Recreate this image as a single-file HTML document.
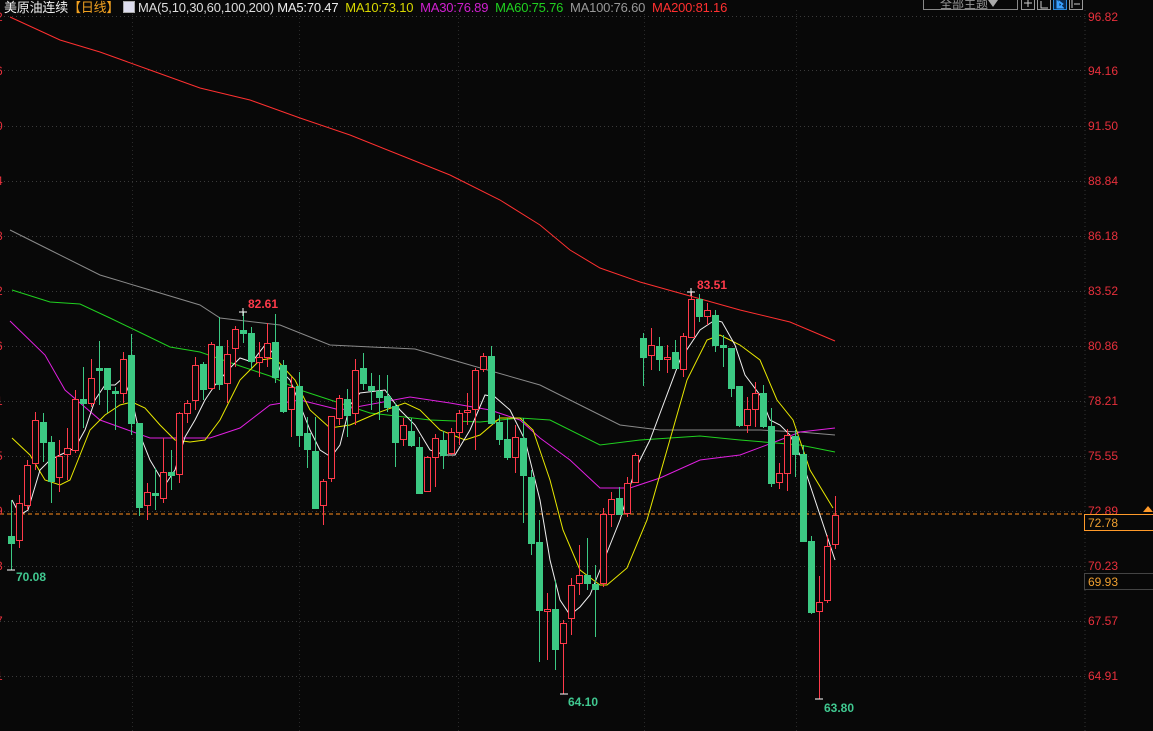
<!DOCTYPE html>
<html><head><meta charset="utf-8"><style>
html,body{margin:0;padding:0;background:#080808;width:1153px;height:731px;overflow:hidden;font-family:"Liberation Sans","Noto Sans CJK SC",sans-serif}
svg{position:absolute;left:0;top:0}
.hd{position:absolute;top:-3px;left:4px;font-size:13px;white-space:nowrap;color:#ddd;letter-spacing:-0.2px}
.ax{font-size:12px;fill:#e8303c}
</style></head><body>
<svg id="s" width="1153" height="731" xmlns="http://www.w3.org/2000/svg">
<g id="grid" stroke="#3a3a3a" stroke-dasharray="1,3" stroke-width="1"></g>
<g id="vgrid" stroke="#2a2a2a" stroke-dasharray="1,3" stroke-width="1"></g>
<line x1="1085" y1="10" x2="1085" y2="731" stroke="#333" stroke-dasharray="1,3"/>
<line x1="0" y1="514" x2="1085" y2="514" stroke="#ff8c1a" stroke-dasharray="4,3"/>
<g id="ma" fill="none" stroke-width="1"></g>
<g id="cd"></g>
<g font-weight="bold" font-size="12">
<text x="248" y="308" fill="#ff3a4a">82.61</text>
<text x="697" y="289" fill="#ff3a4a">83.51</text>
<text x="16" y="581" fill="#40c890">70.08</text>
<text x="568" y="706" fill="#40c890">64.10</text>
<text x="824" y="712" fill="#40c890">63.80</text>
</g>
<g stroke="#fff" stroke-width="1">
<line x1="239" y1="312" x2="247" y2="312"/><line x1="243" y1="308" x2="243" y2="316"/>
<line x1="687" y1="292" x2="695" y2="292"/><line x1="691" y1="288" x2="691" y2="296"/>
<line x1="560" y1="694" x2="568" y2="694"/><line x1="815" y1="699" x2="823" y2="699"/>
<line x1="7" y1="570" x2="15" y2="570"/>
</g>
<g class="ax">
<text x="1088" y="21">96.82</text><text x="1088" y="75">94.16</text><text x="1088" y="130">91.50</text>
<text x="1088" y="185">88.84</text><text x="1088" y="240">86.18</text><text x="1088" y="295">83.52</text>
<text x="1088" y="350">80.86</text><text x="1088" y="405">78.21</text><text x="1088" y="460">75.55</text>
<text x="1088" y="515">72.89</text><text x="1088" y="570">70.23</text><text x="1088" y="625">67.57</text>
<text x="1088" y="680">64.91</text>
<text x="-4" y="21">2</text><text x="-4" y="75">6</text><text x="-4" y="130">0</text><text x="-4" y="185">4</text>
<text x="-4" y="240">8</text><text x="-4" y="295">2</text><text x="-4" y="350">6</text><text x="-4" y="405">1</text>
<text x="-4" y="460">5</text><text x="-4" y="515">9</text><text x="-4" y="570">3</text><text x="-4" y="625">7</text><text x="-4" y="680">1</text>
</g>
<rect x="1084.5" y="514.5" width="70" height="16" fill="#080808" stroke="#ff9a2a"/>
<text x="1088" y="527" font-size="12" fill="#f0a030">72.78</text>
<rect x="1084.5" y="573.5" width="70" height="16" fill="#080808" stroke="#444"/>
<text x="1088" y="586" font-size="12" fill="#f0a030">69.93</text>
<path d="M1143 512 L1148 506 L1153 512 Z" fill="#ff9a2a"/>
<rect x="923.5" y="-2.5" width="94" height="12" fill="none" stroke="#888"/>
<text x="940" y="8" font-size="12" fill="#999">全部主题</text>
<path d="M988 0 L998 0 L993 7 Z" fill="#aaa"/>
<rect x="1021.5" y="-2.5" width="13" height="12" fill="none" stroke="#999"/>
<rect x="1037.5" y="-2.5" width="13" height="12" fill="none" stroke="#999"/>
<rect x="1053.5" y="-2.5" width="13" height="12" fill="#0a2a50" stroke="#2a8ae0"/>
<rect x="1069.5" y="-2.5" width="13" height="12" fill="none" stroke="#999"/>
<path d="M1028 0v7M1024 3h8" stroke="#ccc"/><path d="M1041 1v7h7" stroke="#ccc" fill="none"/>
<path d="M1057 0v8h7M1059 1l4 3-4 3z" stroke="#3aa0ff" fill="#3aa0ff"/><path d="M1072 0v8M1074 4h6" stroke="#ccc"/>
</svg>
<div class="hd"><span style="color:#eee">美原油连续</span><span style="color:#f0a020">【日线】</span> <span style="display:inline-block;width:10px;height:10px;border:1px solid #aaa;background:#dde;vertical-align:-1px"></span> MA(5,10,30,60,100,200) <span style="color:#eee">MA5:70.47</span> &nbsp;<span style="color:#d8d800">MA10:73.10</span> &nbsp;<span style="color:#d020d0">MA30:76.89</span> &nbsp;<span style="color:#20d020">MA60:75.76</span> &nbsp;<span style="color:#999">MA100:76.60</span> &nbsp;<span style="color:#ff3030">MA200:81.16</span></div>
<script>
var NS="http://www.w3.org/2000/svg";
function el(p,t,a){var e=document.createElementNS(NS,t);for(var k in a)e.setAttribute(k,a[k]);p.appendChild(e);return e;}
var g=document.getElementById('grid');
[16,70,126,181,236,291,346,401,456,511,566,621,676].forEach(function(y){el(g,'line',{x1:0,y1:y+.5,x2:1085,y2:y+.5});});
var vg=document.getElementById('vgrid');
[132,299,458,644,796].forEach(function(x){el(vg,'line',{x1:x+.5,y1:10,x2:x+.5,y2:731});});
var ma=document.getElementById('ma');
var L={
"#ff3030":"10,17 60,40 100,52 150,70 200,88 250,100 300,118 350,135 400,155 450,175 500,200 540,225 570,250 600,268 640,282 690,296 740,310 790,322 835,341",
"#8a8a8a":"10,230 50,250 100,275 150,290 200,305 220,318 280,325 330,345 415,349 470,365 540,385 580,405 620,425 660,430 700,430 760,430 800,432 835,435",
"#20d020":"12,290 50,302 80,304 110,318 135,330 170,347 200,352 240,366 270,376 300,390 370,413 430,420 480,422 520,418 550,420 600,445 640,440 700,436 740,440 800,445 835,452",
"#e020e0":"10,321 45,355 65,390 100,420 150,438 210,438 240,428 270,405 300,400 340,410 410,397 450,403 490,410 520,420 540,438 570,460 600,488 630,488 660,478 700,460 740,455 780,440 800,432 835,428",
"#e8e800":"12,438 30,455 45,480 60,485 70,480 90,430 105,415 120,405 132,402 145,408 160,425 175,440 190,442 205,440 220,420 240,380 260,360 275,358 295,380 310,410 330,428 350,425 380,412 405,403 420,410 440,430 465,440 480,435 500,418 520,418 533,430 550,480 563,530 580,570 600,585 607,585 627,568 647,520 667,450 687,380 707,340 720,335 740,345 760,360 777,400 793,420 810,470 833,508",
"#f0f0f0":"12,500 20,515 28,510 40,470 50,460 60,455 75,448 85,430 95,400 105,385 115,385 123,378 132,400 140,435 150,460 165,485 175,470 185,437 195,420 205,400 215,385 230,368 240,358 252,362 265,345 275,355 280,370 290,380 300,405 310,430 320,450 331,457 340,445 350,405 360,393 385,390 400,410 415,425 430,450 445,455 455,455 470,430 485,395 495,397 510,410 525,440 540,500 550,560 560,600 570,615 580,607 590,595 600,570 610,545 620,520 635,470 650,440 665,400 680,360 700,330 715,320 722,322 735,345 745,375 760,395 770,420 780,425 790,435 800,455 815,500 825,530 835,560"};
for(var c in L)el(ma,'polyline',{points:L[c],stroke:c});
var D=[[11,500,536,543,570,0],[19,495,503,540,548,1],[27,460,465,505,510,1],[35,412,420,463,470,1],[43,413,422,442,462,0],[51,436,442,481,503,0],[59,440,456,477,492,1],[67,428,448,454,480,1],[75,390,399,450,453,1],[83,367,399,403,428,0],[91,359,378,403,407,1],[99,341,368,370,405,0],[107,368,368,389,413,0],[115,387,391,393,430,0],[123,352,359,393,403,1],[131,334,355,423,435,0],[139,423,423,507,516,0],[147,483,492,505,520,1],[155,468,493,495,510,0],[163,438,472,498,503,1],[171,450,472,475,490,0],[179,412,413,474,483,1],[187,400,403,413,423,1],[195,357,365,400,410,1],[203,362,364,389,400,0],[211,342,344,388,390,1],[219,317,346,384,390,0],[227,340,354,383,403,1],[235,326,329,348,367,1],[243,312,330,333,343,0],[251,327,333,361,368,0],[259,342,357,362,377,1],[267,323,343,357,367,1],[275,314,342,377,383,0],[283,360,365,411,413,0],[291,377,387,409,437,1],[299,372,386,435,447,0],[307,417,433,449,468,0],[315,417,451,508,508,0],[323,479,481,505,525,1],[331,416,416,478,482,1],[339,395,398,418,425,1],[347,389,399,415,437,0],[355,359,370,413,425,1],[363,353,368,383,390,0],[371,373,386,390,410,0],[379,375,391,397,420,0],[387,375,396,407,412,0],[395,403,406,442,467,0],[403,418,425,439,446,1],[411,418,431,445,447,0],[419,437,447,493,494,0],[427,456,457,491,491,1],[435,434,438,457,487,1],[443,431,440,455,469,0],[451,428,432,453,455,1],[459,410,413,432,445,1],[467,393,410,412,425,1],[475,368,370,409,450,1],[483,353,356,369,372,1],[491,346,356,423,423,0],[499,415,422,439,445,0],[507,418,439,457,460,0],[515,425,437,457,473,1],[523,418,438,475,523,0],[531,470,477,543,555,0],[539,520,542,610,662,0],[547,593,609,611,660,1],[555,580,609,649,670,0],[563,620,623,643,694,1],[571,578,585,618,635,1],[579,545,575,583,595,1],[587,538,575,583,590,0],[595,565,584,589,637,0],[603,508,514,583,587,1],[611,492,499,514,527,1],[619,487,498,514,514,0],[627,477,483,513,517,1],[635,453,455,482,482,1],[643,333,338,357,386,0],[651,328,345,355,370,1],[659,337,346,359,371,0],[667,345,357,359,373,1],[675,340,352,368,368,0],[683,333,336,369,377,1],[691,292,299,337,337,1],[699,294,299,316,322,0],[707,303,310,316,325,1],[715,310,315,345,352,0],[723,335,345,347,367,0],[731,348,348,388,397,0],[739,386,386,425,427,0],[747,397,409,425,433,1],[755,382,393,409,427,1],[763,385,393,426,428,0],[771,408,426,483,487,0],[779,463,473,482,489,1],[787,429,435,473,491,1],[795,430,436,454,477,0],[803,445,454,541,541,0],[811,536,541,612,614,0],[819,576,602,611,699,1],[827,535,546,600,603,1],[835,496,515,544,549,1]];
var cd=document.getElementById('cd');
D.forEach(function(d){var x=d[0],up=d[5],col=up?'#ff3a4a':'#3cc983';
el(cd,'line',{x1:x+.5,y1:d[1],x2:x+.5,y2:d[2],stroke:col});
el(cd,'line',{x1:x+.5,y1:d[3],x2:x+.5,y2:d[4],stroke:col});
var h=Math.max(d[3]-d[2],1);
if(up)el(cd,'rect',{x:x-2.5,y:d[2]+.5,width:6,height:h,fill:'#080808',stroke:col});
else el(cd,'rect',{x:x-3,y:d[2],width:7,height:h+1,fill:col});});
</script>
</body></html>
